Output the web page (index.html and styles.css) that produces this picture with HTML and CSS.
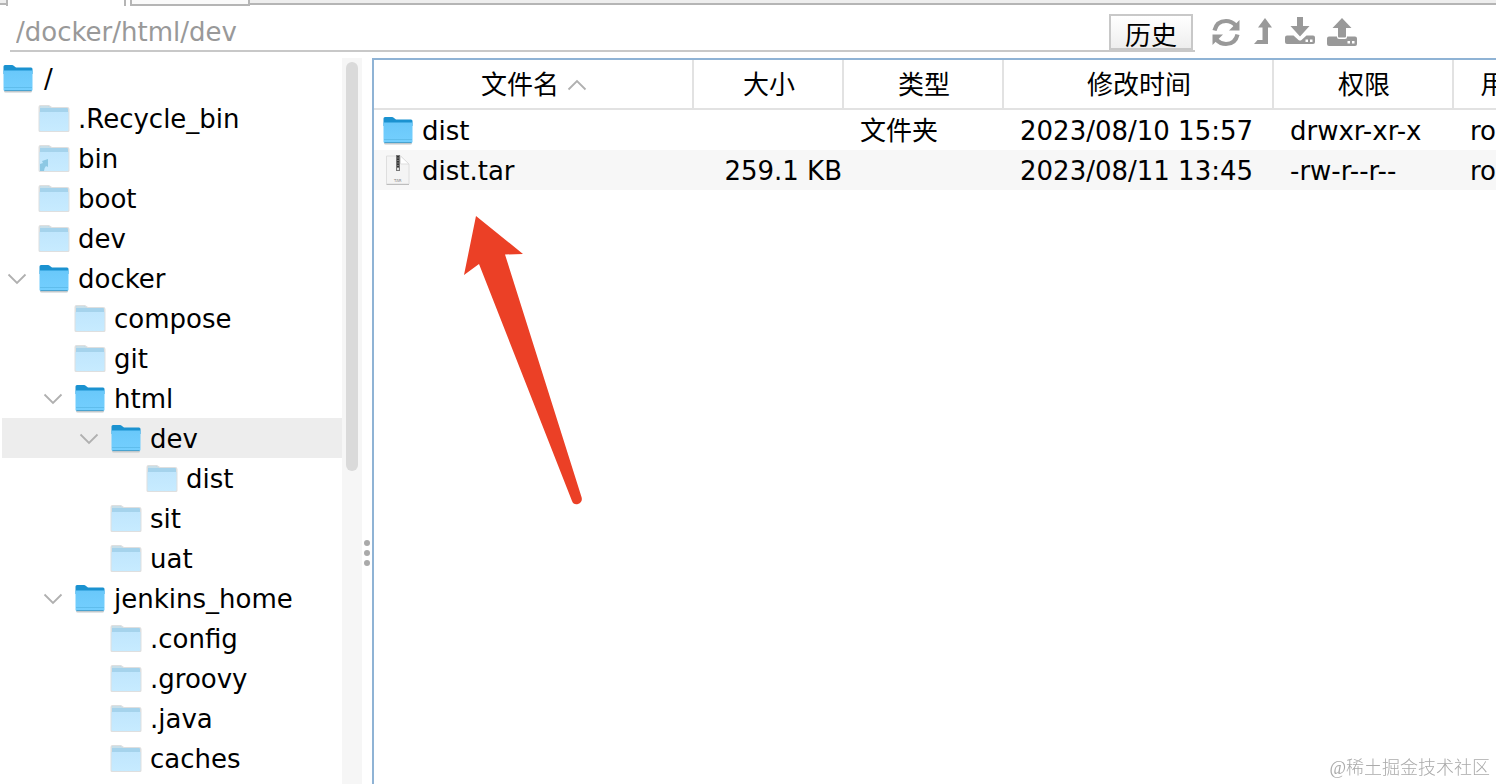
FILE: index.html
```html
<!DOCTYPE html>
<html lang="zh-CN">
<head>
    <meta charset="UTF-8">
    <meta name="viewport" content="width=device-width, initial-scale=1.0">
    <title>/docker/html/dev</title>
    <link rel="stylesheet" href="styles.css">
</head>
<body>
    <svg class="sprite" aria-hidden="true">
        <defs>
            <linearGradient id="blue" x1="0" y1="0" x2="0" y2="1">
                <stop offset="0" stop-color="#69c8fa"/>
                <stop offset="1" stop-color="#74cffe"/>
            </linearGradient>
            <linearGradient id="pale" x1="0" y1="0" x2="0" y2="1">
                <stop offset="0" stop-color="#c0e6fd"/>
                <stop offset="1" stop-color="#c7ebff"/>
            </linearGradient>
        </defs>
        <symbol id="folder" viewBox="0 0 32 30">
            <path d="M2 27h28v1q0 1.500-1.500 1.500h-25q-1.500 0-1.500-1.500z" fill="#c2c8cb"/>
            <path d="M1.500 3.500q0-1.500 1.500-1.500h7q1 0 2 1l2 1.500H29q1.500 0 1.500 1.500v5h-29z" fill="#1b92d0"/>
            <path d="M1.500 7.500h29v19q0 1.500-1.500 1.500H3q-1.500 0-1.500-1.500z" fill="url(#blue)"/>
            <path d="M2 24.500h28" stroke="#5fbdec" stroke-width="1"/>
            <path d="M2.500 27.500h27" stroke="#4aa3cf" stroke-width="1"/>
        </symbol>
        <symbol id="folder-pale" viewBox="0 0 32 30">
            <path d="M.5 4q0-2 2-2h8q1 0 2 1l1.500 1H29q2.500 0 2.500 2v21.500q0 1.500-1.500 1.500H2q-1.500 0-1.500-1.500z" fill="#dedfdf"/>
            <path d="M2 4q0-1 1-1h7l3 2h16q1 0 1 1v4H2z" fill="#a5d3ec"/>
            <path d="M2 4q0-1 1-1h7l3 2H2z" fill="#c8dfe9"/>
            <path d="M1.500 9h29v17.500q0 1.500-1.500 1.500H3q-1.500 0-1.500-1.500z" fill="url(#pale)"/>
        </symbol>
        <symbol id="down" viewBox="0 0 20 12">
            <path d="M1.500 1.500L10 10l8.500-8.500" fill="none" stroke="#b0b0b0" stroke-width="1.800"/>
        </symbol>
    </svg>

    <div class="tabs">
        <span class="tab-edge"></span>
        <span class="tab active"></span>
        <span class="tab"></span>
        <span class="tab-rest"></span>
    </div>

    <header class="toolbar">
        <div class="path">
            <input type="text" value="/docker/html/dev" aria-label="路径">
            <button class="history">历史</button>
        </div>
        <div class="actions">
            <button aria-label="刷新">
                <svg width="30" height="30" viewBox="0 0 30 30">
                    <path d="M3.500 13.500C5 7 9.500 4 15 4c4 0 7 1.500 9.500 4.200" fill="none" stroke="#999" stroke-width="4.200"/>
                    <path d="M28.500 3v10.500H18z" fill="#999"/>
                    <path d="M26.500 17.500C25 24 20.500 27 15 27c-4 0-7-1.500-9.500-4.200" fill="none" stroke="#999" stroke-width="4.200"/>
                    <path d="M1.500 28V17.500H12z" fill="#999"/>
                </svg>
            </button>
            <button aria-label="上级目录">
                <svg width="20" height="30" viewBox="0 0 20 30">
                    <path d="M12 1l7 9.500h-4V27H1l3.500-4H9.500V10.500H5z" fill="#999"/>
                </svg>
            </button>
            <button aria-label="下载">
                <svg width="30" height="30" viewBox="0 0 30 30">
                    <path fill-rule="evenodd" d="M2 18.500h6.500l5 4.500q1.500 1 3 0l5-4.500H28q2 0 2 2V25q0 2-2 2H2q-2 0-2-2v-4.500q0-2 2-2zM20.500 22.500v2.500H23v-2.500zM25 22.500v2.500h2.500v-2.500z" fill="#999"/>
                    <path d="M12 0h6v9h6.500L15 19.500 5.500 9H12z" fill="#999"/>
                </svg>
            </button>
            <button aria-label="上传">
                <svg width="30" height="30" viewBox="0 0 30 30">
                    <path fill-rule="evenodd" d="M2 19.500h8v.5q0 2 2 2h6q2 0 2-2v-.5h8q2 0 2 2v5.500q0 2-2 2H2q-2 0-2-2v-5.500q0-2 2-2zM20.500 24v2.500H23V24zM25 24v2.500h2.500V24z" fill="#999"/>
                    <path d="M15 1l9.500 10H19v8.500q0 1-1 1h-6q-1 0-1-1V11H5.500z" fill="#999"/>
                </svg>
            </button>
        </div>
    </header>

    <main class="browser">
        <nav class="tree" aria-label="目录">
            <ul>
                <li class="root"><svg class="icon"><use href="#folder"/></svg><a href="#">/</a></li>
                <li class="level1"><svg class="icon"><use href="#folder-pale"/></svg><a href="#">.Recycle_bin</a></li>
                <li class="level1">
                    <svg class="icon" viewBox="0 0 32 30"><use href="#folder-pale"/><path d="M2 28v-7l3-1-1-2 6-2v8l-2-1q-2 2-2 5z" fill="#8cc8e4"/></svg><a href="#">bin</a>
                </li>
                <li class="level1"><svg class="icon"><use href="#folder-pale"/></svg><a href="#">boot</a></li>
                <li class="level1"><svg class="icon"><use href="#folder-pale"/></svg><a href="#">dev</a></li>
                <li class="level1 open"><button class="toggle" aria-label="收起 docker"><svg width="20" height="12"><use href="#down"/></svg></button><svg class="icon"><use href="#folder"/></svg><a href="#">docker</a></li>
                <li class="level2"><svg class="icon"><use href="#folder-pale"/></svg><a href="#">compose</a></li>
                <li class="level2"><svg class="icon"><use href="#folder-pale"/></svg><a href="#">git</a></li>
                <li class="level2 open"><button class="toggle" aria-label="收起 html"><svg width="20" height="12"><use href="#down"/></svg></button><svg class="icon"><use href="#folder"/></svg><a href="#">html</a></li>
                <li class="level3 open selected"><button class="toggle" aria-label="收起 dev"><svg width="20" height="12"><use href="#down"/></svg></button><svg class="icon"><use href="#folder"/></svg><a href="#">dev</a></li>
                <li class="level4"><svg class="icon"><use href="#folder-pale"/></svg><a href="#">dist</a></li>
                <li class="level3"><svg class="icon"><use href="#folder-pale"/></svg><a href="#">sit</a></li>
                <li class="level3"><svg class="icon"><use href="#folder-pale"/></svg><a href="#">uat</a></li>
                <li class="level2 open"><button class="toggle" aria-label="收起 jenkins_home"><svg width="20" height="12"><use href="#down"/></svg></button><svg class="icon"><use href="#folder"/></svg><a href="#">jenkins_home</a></li>
                <li class="level3"><svg class="icon"><use href="#folder-pale"/></svg><a href="#">.config</a></li>
                <li class="level3"><svg class="icon"><use href="#folder-pale"/></svg><a href="#">.groovy</a></li>
                <li class="level3"><svg class="icon"><use href="#folder-pale"/></svg><a href="#">.java</a></li>
                <li class="level3"><svg class="icon"><use href="#folder-pale"/></svg><a href="#">caches</a></li>
            </ul>
        </nav>
        <div class="scrollbar"><div class="thumb"></div></div>
        <div class="splitter"><i></i><i></i><i></i></div>

        <section class="files">
            <table>
                <colgroup>
                    <col class="col-name">
                    <col class="col-size">
                    <col class="col-type">
                    <col class="col-time">
                    <col class="col-mode">
                    <col class="col-owner">
                </colgroup>
                <thead>
                    <tr>
                        <th><span class="sorted">文件名<svg width="20" height="12" viewBox="0 0 20 12"><path d="M1.500 10.500L10 2l8.500 8.500" fill="none" stroke="#b0b0b0" stroke-width="1.800"/></svg></span></th>
                        <th>大小</th>
                        <th>类型</th>
                        <th>修改时间</th>
                        <th>权限</th>
                        <th>用户/组</th>
                    </tr>
                </thead>
                <tbody>
                    <tr>
                        <td><div class="name"><svg class="icon"><use href="#folder"/></svg>dist</div></td>
                        <td class="size"></td>
                        <td>文件夹</td>
                        <td>2023/08/10 15:57</td>
                        <td>drwxr-xr-x</td>
                        <td>root/root</td>
                    </tr>
                    <tr>
                        <td>
                            <div class="name">
                                <svg class="icon" viewBox="0 0 32 30">
                                    <path d="M4.500 1h14l8.500 8v20H4.500z" fill="#f4f4f4" stroke="#dedede"/>
                                    <path d="M4.500 29.500H27" stroke="#bdbdbd"/>
                                    <path d="M18.500 1v8H27z" fill="#fff" stroke="#ddd"/>
                                    <path d="M14 0h4v16h-4z" fill="#777"/>
                                    <path d="M16 1v11" stroke="#333" stroke-width="2" stroke-dasharray="1.500 1"/>
                                    <path d="M15 13h2v2h-2z" fill="#ddd"/>
                                    <text x="12" y="27" class="badge">TAR</text>
                                </svg>dist.tar
                            </div>
                        </td>
                        <td class="size">259.1 KB</td>
                        <td></td>
                        <td>2023/08/11 13:45</td>
                        <td>-rw-r--r--</td>
                        <td>root/root</td>
                    </tr>
                </tbody>
            </table>
            <svg class="arrow" width="120" height="290" viewBox="0 0 120 290" aria-hidden="true">
                <path d="M13 0L60 38L42 38.500L118.500 281Q120 286 115 288Q110.500 289 109 285L16 48L1 59z" fill="#eb4026"/>
            </svg>
        </section>
    </main>

    <div class="watermark">@稀土掘金技术社区</div>
</body>
</html>
```

FILE: styles.css
```css
* {
    box-sizing: border-box;
}
body {
    display: flex;
    flex-direction: column;
    height: 100vh;
    margin: 0;
    overflow: hidden;
    background: #fff;
    color: #000;
    font-family: "DejaVu Sans", "Noto Sans CJK SC", sans-serif;
    font-size: 26px;
    line-height: 38px;
}
button {
    padding: 0;
    border: 0;
    background: none;
    font: inherit;
    color: inherit;
}
svg {
    display: block;
    flex-shrink: 0;
}
.sprite {
    position: absolute;
    width: 0;
    height: 0;
}

/* bottom edge of the tab strip */
.tabs {
    display: flex;
    flex-shrink: 0;
    height: 6px;
}
.tab-edge {
    width: 6px;
    height: 5px;
    background: #eee;
    border-bottom: 2px solid #b5b5b5;
}
.tab {
    width: 120px;
    height: 6px;
    background: #fafafa;
    border: 2px solid #b5b5b5;
    border-top: 0;
    margin-left: 4px;
}
.tab.active {
    margin-left: 0;
    background: #fff;
    border-bottom: 0;
}
.tab-rest {
    flex: 1;
    height: 5px;
    background: #eee;
    border-bottom: 2px solid #b5b5b5;
}

.toolbar {
    display: flex;
    flex-shrink: 0;
    height: 52px;
    padding: 0 10px;
    gap: 16px;
}
.path {
    display: flex;
    align-items: flex-end;
    flex: 1;
    height: 46px;
    border-bottom: 2px solid #c8c8c8;
}
.path input {
    flex: 1;
    min-width: 0;
    height: 36px;
    padding: 0 6px;
    border: 0;
    outline: 0;
    background: none;
    font: inherit;
    color: #999;
}
.history {
    width: 84px;
    height: 36px;
    padding-top: 4px;
    margin-right: 2px;
    border: 2px solid #c8c8c8;
    background: linear-gradient(#fff, #eee);
    line-height: 32px;
}
.actions {
    display: flex;
    align-items: flex-start;
    gap: 12px;
    width: 275px;
    padding-top: 11px;
}

.browser {
    display: flex;
    flex: 1;
    min-height: 0;
}
.tree {
    width: 342px;
    padding-left: 2px;
    overflow: hidden;
}
.tree ul {
    margin: 0;
    padding: 0;
    list-style: none;
}
.tree li {
    display: flex;
    align-items: center;
    height: 40px;
}
.tree a {
    padding-top: 2px;
    color: inherit;
    text-decoration: none;
}
.icon {
    width: 32px;
    height: 30px;
    margin-right: 8px;
}
.root a {
    padding-left: 2px;
}
.level1 {
    padding-left: 36px;
}
.level2 {
    padding-left: 72px;
}
.level3 {
    padding-left: 108px;
}
.level4 {
    padding-left: 144px;
}
.toggle {
    width: 20px;
    margin: 2px 11px 0 -31px;
}
.selected {
    background: #ededed;
}
.scrollbar {
    width: 20px;
    padding: 4px;
    background: #f6f6f6;
}
.thumb {
    width: 12px;
    height: 57%;
    border-radius: 6px;
    background: #dadada;
}
.splitter {
    display: flex;
    flex-direction: column;
    align-items: center;
    gap: 4px;
    width: 10px;
    padding-top: 482px;
}
.splitter i {
    width: 6px;
    height: 6px;
    border-radius: 50%;
    background: #aaa;
}

.files {
    position: relative;
    flex: 1;
    min-width: 0;
    overflow: hidden;
    border-top: 2px solid #8fb3d5;
    border-left: 2px solid #8fb3d5;
}
table {
    width: 1220px;
    table-layout: fixed;
    border-collapse: separate;
    border-spacing: 0;
}
.col-name {
    width: 320px;
}
.col-size {
    width: 150px;
}
.col-type {
    width: 160px;
}
.col-time {
    width: 270px;
}
.col-mode {
    width: 180px;
}
.col-owner {
    width: 140px;
}
th {
    height: 50px;
    padding: 2px 0 0 2px;
    border-right: 2px solid #e2e2e2;
    border-bottom: 2px solid #e2e2e2;
    font-weight: normal;
    text-align: center;
}
.sorted {
    display: flex;
    align-items: center;
    justify-content: center;
    gap: 8px;
}
td {
    height: 40px;
    padding: 2px 0 0 16px;
    white-space: nowrap;
}
td:first-child {
    padding-left: 8px;
}
td.size {
    padding: 2px 2px 0 0;
    text-align: right;
}
tbody tr:nth-child(even) {
    background: #f7f7f7;
}
.name {
    display: flex;
    align-items: center;
}
.name .icon {
    margin-bottom: 2px;
}
.badge {
    font-size: 4px;
    fill: #888;
}
.arrow {
    position: absolute;
    top: 156px;
    left: 89px;
}
.watermark {
    position: fixed;
    right: 6px;
    bottom: 3px;
    color: #aaa;
    font-family: "Liberation Serif", "Noto Sans CJK SC", serif;
    font-size: 18px;
    font-weight: 300;
    line-height: 26px;
}
```
